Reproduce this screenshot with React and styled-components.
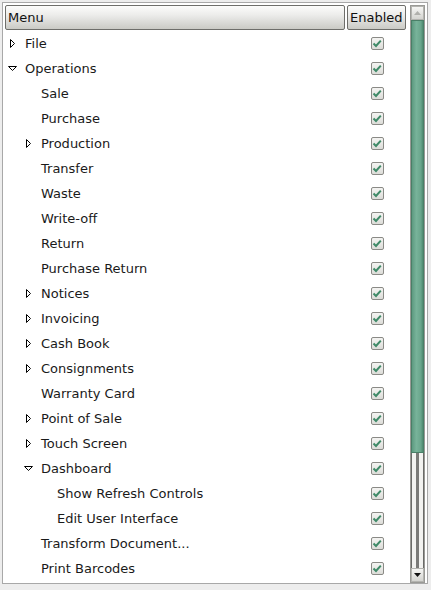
import React from 'react'
import styled, { createGlobalStyle } from 'styled-components'

const Global = createGlobalStyle`
  html, body {
    margin: 0;
    padding: 0;
    background: #ededed;
  }
  body {
    font-family: "DejaVu Sans", sans-serif;
    font-size: 13px;
    color: #1a1a1a;
  }
`

// STYLE
const Page = styled.div`
  width: 431px;
  height: 590px;
  padding: 2px 3px 0 2px;
  box-sizing: border-box;
`
const Frame = styled.div`
  display: flex;
  height: 582px;
  border: 1px solid #a8a8a8;
  background: #fff;
  box-sizing: border-box;
  padding: 1px 2px 0 1px;
`
const View = styled.div`
  flex: 1;
  display: flex;
  flex-direction: column;
  min-width: 0;
`
const Header = styled.div`
  display: flex;
  gap: 2px;
  padding: 1px 4px 0 1px;
  height: 27px;
  box-sizing: border-box;
`
const HeadButton = styled.div`
  flex: ${(p) => (p.grow ? 1 : '0 0 auto')};
  width: ${(p) => (p.w ? `${p.w}px` : 'auto')};
  box-sizing: border-box;
  height: 25px;
  border: 1px solid #6e6e6a;
  border-radius: 2px;
  background: linear-gradient(#fcfcfb 0%, #ececea 40%, #cacac5 100%);
  display: flex;
  align-items: center;
  padding: 0 2px;
  font-size: 13px;
  color: #111;
`
const Row = styled.div`
  display: flex;
  align-items: center;
  height: 25px;
  padding-left: ${(p) => 4 + p.level * 16}px;
`
const Expander = styled.span`
  width: 13px;
  display: inline-flex;
  align-items: center;
  justify-content: flex-start;
  margin-right: 4px;
  color: #000;
`
const Label = styled.span`
  flex: 1;
  white-space: nowrap;
`
const CheckCell = styled.div`
  width: 56px;
  display: flex;
  justify-content: center;
  margin-right: 5px;
`
const Check = styled.span`
  width: 11px;
  height: 11px;
  border: 1px solid #8a8a86;
  border-radius: 2px;
  background: linear-gradient(#f4f4f2, #dcdcd8);
  display: inline-flex;
  align-items: center;
  justify-content: center;
`
const Scrollbar = styled.div`
  width: 15px;
  display: flex;
  flex-direction: column;
  border: 1px solid #9a9a96;
  box-sizing: border-box;
  background: #e4e4e2;
  margin-top: 1px;
`
const ArrowBtn = styled.div`
  height: 14px;
  display: flex;
  align-items: center;
  justify-content: center;
  background: linear-gradient(#f6f6f4, #d4d4d0);
  border: 1px solid #b4b4b0;
  box-sizing: border-box;
`
const Thumb = styled.div`
  height: 433px;
  background: linear-gradient(90deg, #5d9a80, #78b39a 40%, #6aa68c 80%, #4f8a70);
  border: 1px solid #4a7f67;
  box-sizing: border-box;
`
const Track = styled.div`
  flex: 1;
  display: flex;
  justify-content: center;
  background: linear-gradient(90deg, #6a6a68 0, #6a6a68 1px, #f2f2f0 1px, #f2f2f0 12px, #6a6a68 12px);
`
const Groove = styled.div`
  width: 3px;
  background: #7a7a78;
`

const Arrow = ({ open }) => (
  <svg width="9" height="9" viewBox="0 0 9 9">
    {open ? (
      <path d="M0.5 2.5 H8.5 L4.5 6.5 Z" fill="none" stroke="#000" strokeWidth="1" />
    ) : (
      <path d="M2.5 0.5 V8.5 L6.5 4.5 Z" fill="none" stroke="#000" strokeWidth="1" />
    )}
  </svg>
)

const Tick = () => (
  <svg width="10" height="9" viewBox="0 0 10 9">
    <path d="M1.5 4.5 L4 7 L8.8 1.6" fill="none" stroke="#3f8a68" strokeWidth="2" />
  </svg>
)

const items = [
  { label: 'File', level: 0, arrow: 'closed' },
  { label: 'Operations', level: 0, arrow: 'open' },
  { label: 'Sale', level: 1 },
  { label: 'Purchase', level: 1 },
  { label: 'Production', level: 1, arrow: 'closed' },
  { label: 'Transfer', level: 1 },
  { label: 'Waste', level: 1 },
  { label: 'Write-off', level: 1 },
  { label: 'Return', level: 1 },
  { label: 'Purchase Return', level: 1 },
  { label: 'Notices', level: 1, arrow: 'closed' },
  { label: 'Invoicing', level: 1, arrow: 'closed' },
  { label: 'Cash Book', level: 1, arrow: 'closed' },
  { label: 'Consignments', level: 1, arrow: 'closed' },
  { label: 'Warranty Card', level: 1 },
  { label: 'Point of Sale', level: 1, arrow: 'closed' },
  { label: 'Touch Screen', level: 1, arrow: 'closed' },
  { label: 'Dashboard', level: 1, arrow: 'open' },
  { label: 'Show Refresh Controls', level: 2 },
  { label: 'Edit User Interface', level: 2 },
  { label: 'Transform Document...', level: 1 },
  { label: 'Print Barcodes', level: 1 },
]

const App = () => (
  <Page>
    <Global />
    <Frame>
      <View>
        <Header>
          <HeadButton grow>Menu</HeadButton>
          <HeadButton w={59}>Enabled</HeadButton>
        </Header>
        {items.map((it) => (
          <Row key={it.label} level={it.level}>
            <Expander>{it.arrow && <Arrow open={it.arrow === 'open'} />}</Expander>
            <Label>{it.label}</Label>
            <CheckCell>
              <Check>
                <Tick />
              </Check>
            </CheckCell>
          </Row>
        ))}
      </View>
      <Scrollbar>
        <ArrowBtn>
          <svg width="7" height="4" viewBox="0 0 7 4">
            <path d="M0 4 L3.5 0 L7 4 Z" fill="#b0b0ac" />
          </svg>
        </ArrowBtn>
        <Thumb />
        <Track>
          <Groove />
        </Track>
        <ArrowBtn>
          <svg width="7" height="4" viewBox="0 0 7 4">
            <path d="M0 0 L7 0 L3.5 4 Z" fill="#111" />
          </svg>
        </ArrowBtn>
      </Scrollbar>
    </Frame>
  </Page>
)

export default App
